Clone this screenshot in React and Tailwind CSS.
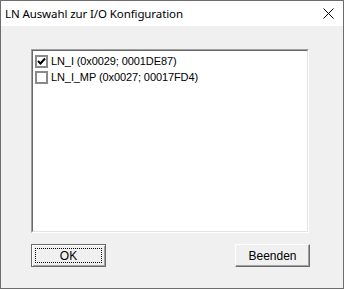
import { useState } from "react";

const items = [
  { label: "LN_I (0x0029; 0001DE87)", checked: true },
  { label: "LN_I_MP (0x0027; 00017FD4)", checked: false },
];

function CheckBox({ checked }) {
  return (
    <div className="w-[13px] h-[13px] bg-white border-2 border-[#8a8a8a] flex items-center justify-center shrink-0">
      {checked && (
        <svg width="9" height="9" viewBox="0 0 9 9">
          <path d="M1 4 L3.5 6.5 L8 1.5" stroke="#000" strokeWidth="2" fill="none" />
        </svg>
      )}
    </div>
  );
}

function Button({ children, isDefault }) {
  return (
    <button
      className={
        "w-[75px] h-[23px] bg-[#f0f0f0] text-black text-[12px] flex items-center justify-center " +
        (isDefault
          ? "border border-[#6a6a6a] shadow-[inset_1px_1px_0_#fff,inset_-1px_-1px_0_#a0a0a0]"
          : "border border-t-white border-l-white border-r-[#6a6a6a] border-b-[#6a6a6a] shadow-[inset_-1px_-1px_0_#a0a0a0]")
      }
    >
      {isDefault ? (
        <span className="w-[67px] h-[15px] border border-dotted border-black flex items-center justify-center leading-none">
          {children}
        </span>
      ) : (
        <span className="leading-none">{children}</span>
      )}
    </button>
  );
}

export default function App() {
  const [list, setList] = useState(items);

  const toggle = (i) =>
    setList(list.map((it, j) => (j === i ? { ...it, checked: !it.checked } : it)));

  return (
    <div className="w-[344px] h-[289px] border border-[#6d6d6d] bg-[#f0f0f0] flex flex-col" style={{ fontFamily: "'Liberation Sans', sans-serif" }}>
      <div className="h-[25px] bg-white flex items-center justify-between pl-[4px] pr-[9px] shrink-0">
        <span className="text-[11.5px] text-black tracking-[-0.1px]" style={{ fontFamily: "'Noto Sans', sans-serif" }}>
          LN Auswahl zur I/O Konfiguration
        </span>
        <svg width="11" height="11" viewBox="0 0 11 11">
          <path d="M0.5 0.5 L10.5 10.5 M10.5 0.5 L0.5 10.5" stroke="#000" strokeWidth="1" />
        </svg>
      </div>

      <div className="flex flex-col pl-[30px] pt-[23px]">
        <div className="w-[278px] h-[184px] bg-white border border-t-[#a0a0a0] border-l-[#a0a0a0] border-r-white border-b-white">
          <div className="w-full h-full border border-t-[#696969] border-l-[#696969] border-r-[#e3e3e3] border-b-[#e3e3e3] pt-[2px] pl-[2px]">
            {list.map((it, i) => (
              <div key={i} className="h-[16px] flex items-center gap-[2px] cursor-default" onClick={() => toggle(i)}>
                <CheckBox checked={it.checked} />
                <span className="text-[11px] text-black pl-[1px] tracking-[-0.1px]">{it.label}</span>
              </div>
            ))}
          </div>
        </div>

        <div className="w-[279px] mt-[11px] flex justify-between">
          <Button isDefault>OK</Button>
          <Button>Beenden</Button>
        </div>
      </div>
    </div>
  );
}
